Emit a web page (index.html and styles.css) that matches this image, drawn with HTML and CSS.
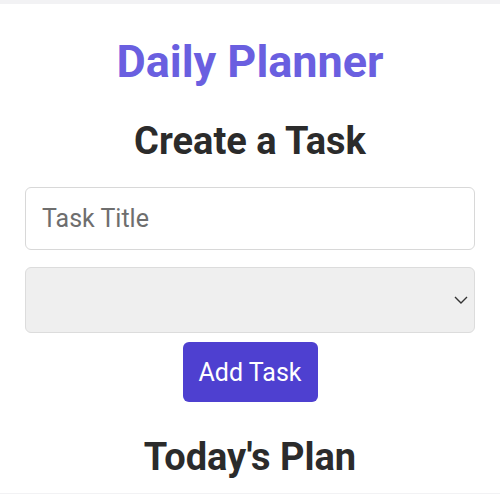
FILE: index.html
```html
<!DOCTYPE html>
<html>
<head>
<meta charset="utf-8">
<link rel="stylesheet" href="styles.css">
</head>
<body>
<div class="card">
  <h1 class="title">Daily Planner</h1>
  <h2 class="section">Create a Task</h2>
  <form class="form">
    <input class="field" type="text" placeholder="Task Title">
    <div class="select-wrap">
      <select class="select"><option></option></select>
      <svg class="chev" width="14" height="8" viewBox="0 0 14 8"><path d="M1 1 L7 7 L13 1" fill="none" stroke="#333" stroke-width="1.4"/></svg>
    </div>
    <button class="btn" type="button">Add Task</button>
  </form>
  <h2 class="section plan">Today's Plan</h2>
</div>
<div class="card next"></div>
</body>
</html>
```
FILE: styles.css
```css
html, body { margin: 0; padding: 0; }
body {
  background: #f2f2f4;
  font-family: Roboto, "Noto Sans", sans-serif;
  padding-top: 4px;
}
.card {
  background: #fff;
  height: 489px;
  box-sizing: border-box;
  padding: 0 25px 0 25px;
  display: flex;
  flex-direction: column;
  align-items: center;
}
.card.next { margin-top: 1px; height: 100px; }
.title {
  margin: 32px 0 0;
  font-size: 45px;
  font-weight: 700;
  color: #6a5fe0;
  line-height: 52px;
}
.section {
  margin: 31px 0 0;
  font-size: 38px;
  font-weight: 700;
  color: #2b2b2b;
  line-height: 44px;
}
.form {
  width: 100%;
  margin-top: 24px;
  display: flex;
  flex-direction: column;
  align-items: center;
}
.field {
  width: 100%;
  box-sizing: border-box;
  height: 63px;
  border: 1px solid #d8d8d8;
  border-radius: 6px;
  padding: 0 16px;
  font-family: Roboto, sans-serif;
  font-size: 25px;
  color: #333;
  background: #fff;
  outline: none;
}
.field::placeholder { color: #6e6e6e; }
.select-wrap {
  position: relative;
  width: 100%;
  margin-top: 17px;
}
.select {
  width: 100%;
  height: 66px;
  box-sizing: border-box;
  border: 1px solid #dcdcdc;
  border-radius: 6px;
  background: #efefef;
  appearance: none;
  -webkit-appearance: none;
  display: block;
}
.chev {
  position: absolute;
  right: 7px;
  top: 29px;
}
.btn {
  margin-top: 9px;
  width: 135px;
  height: 60px;
  border: none;
  border-radius: 6px;
  background: #4e40d0;
  color: #fff;
  font-family: Roboto, sans-serif;
  font-size: 25px;
}
.plan { margin-top: 33px; }
```
